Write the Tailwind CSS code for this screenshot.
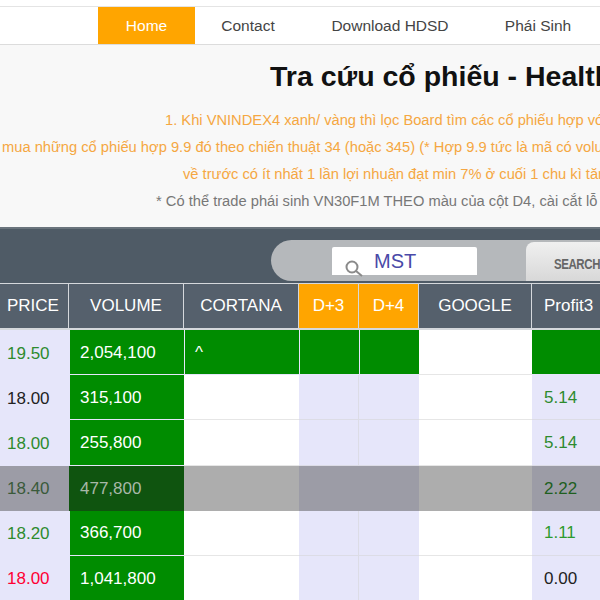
<!DOCTYPE html>
<html lang="en">
<head>
  <meta charset="UTF-8" />
  <meta name="viewport" content="width=device-width, initial-scale=1.0" />
  <title>Tra cứu cổ phiếu</title>
  <script src="https://cdn.jsdelivr.net/npm/@tailwindcss/browser@4"></script>
</head>
<body class="w-[600px] h-[600px] overflow-hidden bg-[#f8f8f8] font-['Liberation_Sans',Arial,sans-serif]">
  <!-- nav -->
  <div class="h-[7px] bg-white border-b border-[#e4e4e4]"></div>
  <div class="h-[38px] bg-white border-b border-[#dcdcdc] pl-[98px] flex text-[15.5px] text-[#444]">
    <a class="w-[97px] h-[37px] bg-[#ffa500] text-white flex items-center justify-center shrink-0">Home</a>
    <a class="w-[106px] flex items-center justify-center shrink-0">Contact</a>
    <a class="w-[178px] flex items-center justify-center shrink-0">Download HDSD</a>
    <a class="w-[118px] flex items-center justify-center shrink-0">Phái Sinh</a>
  </div>

  <!-- heading and notes -->
  <div class="h-[182px] relative overflow-hidden">
    <h1 class="absolute left-[270px] top-[13px] whitespace-nowrap text-[28.5px] leading-[36px] font-bold text-[#111]">Tra cứu cổ phiếu - Health Check</h1>
    <div class="absolute left-[2px] top-[62px] w-[900px] text-[14.7px] leading-[27px] text-[#f5a742] whitespace-nowrap">
      <p class="pl-[163px]">1. Khi VNINDEX4 xanh/ vàng thì lọc Board tìm các cổ phiếu hợp với</p>
      <p>mua những cổ phiếu hợp 9.9 đó theo chiến thuật 34 (hoặc 345) (* Hợp 9.9 tức là mã có volume</p>
      <p class="pl-[181px]">về trước có ít nhất 1 lần lợi nhuận đạt min 7% ở cuối 1 chu kì tăng</p>
      <p class="pl-[154px] text-[#777]">* Có thể trade phái sinh VN30F1M THEO màu của cột D4, cài cắt lỗ</p>
    </div>
  </div>

  <!-- search bar -->
  <div class="h-[56px] bg-[#4f5b66] border-t-2 border-[#6a747d] pt-[11px] pl-[271px]">
    <div class="h-[41px] bg-[#b5b8bb] rounded-l-[21px] flex items-start pl-[61px] pt-[7px] w-[400px]">
      <div class="w-[145px] h-[28px] bg-white rounded-t-[2px] relative text-[20px] leading-[28px] text-[#4a4aa8] pl-[42px] shrink-0">
        MST
        <svg class="absolute left-[12px] top-[12px]" width="20" height="20" viewBox="0 0 20 20" fill="none" stroke="#8a8a8a"><circle cx="8" cy="8" r="5.5" stroke-width="2"/><path d="M12 12l6 5" stroke-width="2"/></svg>
      </div>
      <div class="ml-[49px] w-[100px] h-[39px] -mt-[5px] bg-gradient-to-b from-[#f0f0f0] to-[#d8d8d8] rounded-tl-[8px] pl-[28px] pt-[14px] text-[14px] leading-[16px] font-bold text-[#666] tracking-[-0.5px] shrink-0"><span class="inline-block origin-left scale-x-[0.82]">SEARCH</span></div>
    </div>
  </div>

  <!-- table -->
  <div class="grid grid-cols-[69px_115px_115px_60px_60px_113px_68px] text-[17px]">
    <div class="h-[47px] bg-[#55606c] border-r border-t border-b-2 border-[#d5d8dc] text-white flex items-center pl-[7px]">PRICE</div>
    <div class="h-[47px] bg-[#55606c] border-r border-t border-b-2 border-[#d5d8dc] text-white flex items-center justify-center">VOLUME</div>
    <div class="h-[47px] bg-[#55606c] border-r border-t border-b-2 border-[#d5d8dc] text-white flex items-center justify-center">CORTANA</div>
    <div class="h-[47px] bg-[#ffa500] border-r border-t border-b-2 border-[#d5d8dc] text-white flex items-center justify-center">D+3</div>
    <div class="h-[47px] bg-[#ffa500] border-r border-t border-b-2 border-[#d5d8dc] text-white flex items-center justify-center">D+4</div>
    <div class="h-[47px] bg-[#55606c] border-r border-t border-b-2 border-[#d5d8dc] text-white flex items-center justify-center">GOOGLE</div>
    <div class="h-[47px] bg-[#55606c] border-t border-b-2 border-[#d5d8dc] text-white flex items-center pl-[12px]">Profit3</div>

    <!-- row 1 -->
    <div class="h-[45px] pt-[2px] bg-[#e6e6fa] text-[#2e8b2e] flex items-center pl-[7px]">19.50</div>
    <div class="h-[45px] pt-[2px] bg-[#008c00] text-white flex items-center pl-[10px] border-l border-b border-[#e6e6fa]">2,054,100</div>
    <div class="h-[45px] bg-[#008c00] text-white flex items-start pt-[10px] pl-[10px] border-l border-b border-[#e6e6fa]">^</div>
    <div class="h-[45px] bg-[#008c00] border-l border-b border-[#e6e6fa]"></div>
    <div class="h-[45px] bg-[#008c00] border-l border-b border-[#e6e6fa]"></div>
    <div class="h-[45px] bg-white border-b border-[#e6e6e6]"></div>
    <div class="h-[45px] bg-[#008c00] border-b border-[#e6e6fa]"></div>

    <!-- row 2 -->
    <div class="h-[45px] pt-[2px] bg-[#e6e6fa] text-[#222] flex items-center pl-[7px]">18.00</div>
    <div class="h-[45px] pt-[2px] bg-[#008c00] text-white flex items-center pl-[10px] border-l border-b border-[#e6e6fa]">315,100</div>
    <div class="h-[45px] bg-white border-b border-[#e6e6e6]"></div>
    <div class="h-[45px] bg-[#e6e6fa] border-r border-b border-[#dcdce6]"></div>
    <div class="h-[45px] bg-[#e6e6fa] border-b border-[#dcdce6]"></div>
    <div class="h-[45px] bg-white border-b border-[#e6e6e6]"></div>
    <div class="h-[45px] pt-[2px] bg-[#e6e6fa] text-[#2e8b2e] flex items-center pl-[12px] border-b border-[#dcdce6]">5.14</div>

    <!-- row 3 -->
    <div class="h-[46px] pt-[1px] bg-[#e6e6fa] text-[#2e8b2e] flex items-center pl-[7px]">18.00</div>
    <div class="h-[46px] pt-[1px] bg-[#008c00] text-white flex items-center pl-[10px] border-l border-b border-[#e6e6fa]">255,800</div>
    <div class="h-[46px] bg-white border-b border-[#e6e6e6]"></div>
    <div class="h-[46px] bg-[#e6e6fa] border-r border-b border-[#dcdce6]"></div>
    <div class="h-[46px] bg-[#e6e6fa] border-b border-[#dcdce6]"></div>
    <div class="h-[46px] bg-white border-b border-[#e6e6e6]"></div>
    <div class="h-[46px] pt-[1px] bg-[#e6e6fa] text-[#2e8b2e] flex items-center pl-[12px] border-b border-[#dcdce6]">5.14</div>

    <!-- row 4, hovered -->
    <div class="h-[45px] bg-[#9c9ca6] text-[#3a5a3a] flex items-center pl-[7px]">18.40</div>
    <div class="h-[45px] bg-[#0f540f] text-[#a8b8a8] flex items-center pl-[11px]">477,800</div>
    <div class="h-[45px] bg-[#adadad]"></div>
    <div class="h-[45px] bg-[#9c9ca6]"></div>
    <div class="h-[45px] bg-[#9c9ca6]"></div>
    <div class="h-[45px] bg-[#adadad]"></div>
    <div class="h-[45px] bg-[#9c9ca6] text-[#1f5f1f] flex items-center pl-[12px]">2.22</div>

    <!-- row 5 -->
    <div class="h-[45px] bg-[#e6e6fa] text-[#2e8b2e] flex items-center pl-[7px]">18.20</div>
    <div class="h-[45px] bg-[#008c00] text-white flex items-center pl-[10px] border-l border-b border-[#e6e6fa]">366,700</div>
    <div class="h-[45px] bg-white border-b border-[#e6e6e6]"></div>
    <div class="h-[45px] bg-[#e6e6fa] border-r border-b border-[#dcdce6]"></div>
    <div class="h-[45px] bg-[#e6e6fa] border-b border-[#dcdce6]"></div>
    <div class="h-[45px] bg-white border-b border-[#e6e6e6]"></div>
    <div class="h-[45px] bg-[#e6e6fa] text-[#2e9b2e] flex items-center pl-[12px] border-b border-[#dcdce6]">1.11</div>

    <!-- row 6 -->
    <div class="h-[46px] bg-[#e6e6fa] text-[#ff0033] flex items-center pl-[7px]">18.00</div>
    <div class="h-[46px] bg-[#008c00] text-white flex items-center pl-[10px] border-l border-b border-[#e6e6fa]">1,041,800</div>
    <div class="h-[46px] bg-white border-b border-[#e6e6e6]"></div>
    <div class="h-[46px] bg-[#e6e6fa] border-r border-b border-[#dcdce6]"></div>
    <div class="h-[46px] bg-[#e6e6fa] border-b border-[#dcdce6]"></div>
    <div class="h-[46px] bg-white border-b border-[#e6e6e6]"></div>
    <div class="h-[46px] bg-[#e6e6fa] text-[#222] flex items-center pl-[12px] border-b border-[#dcdce6]">0.00</div>
  </div>
</body>
</html>
